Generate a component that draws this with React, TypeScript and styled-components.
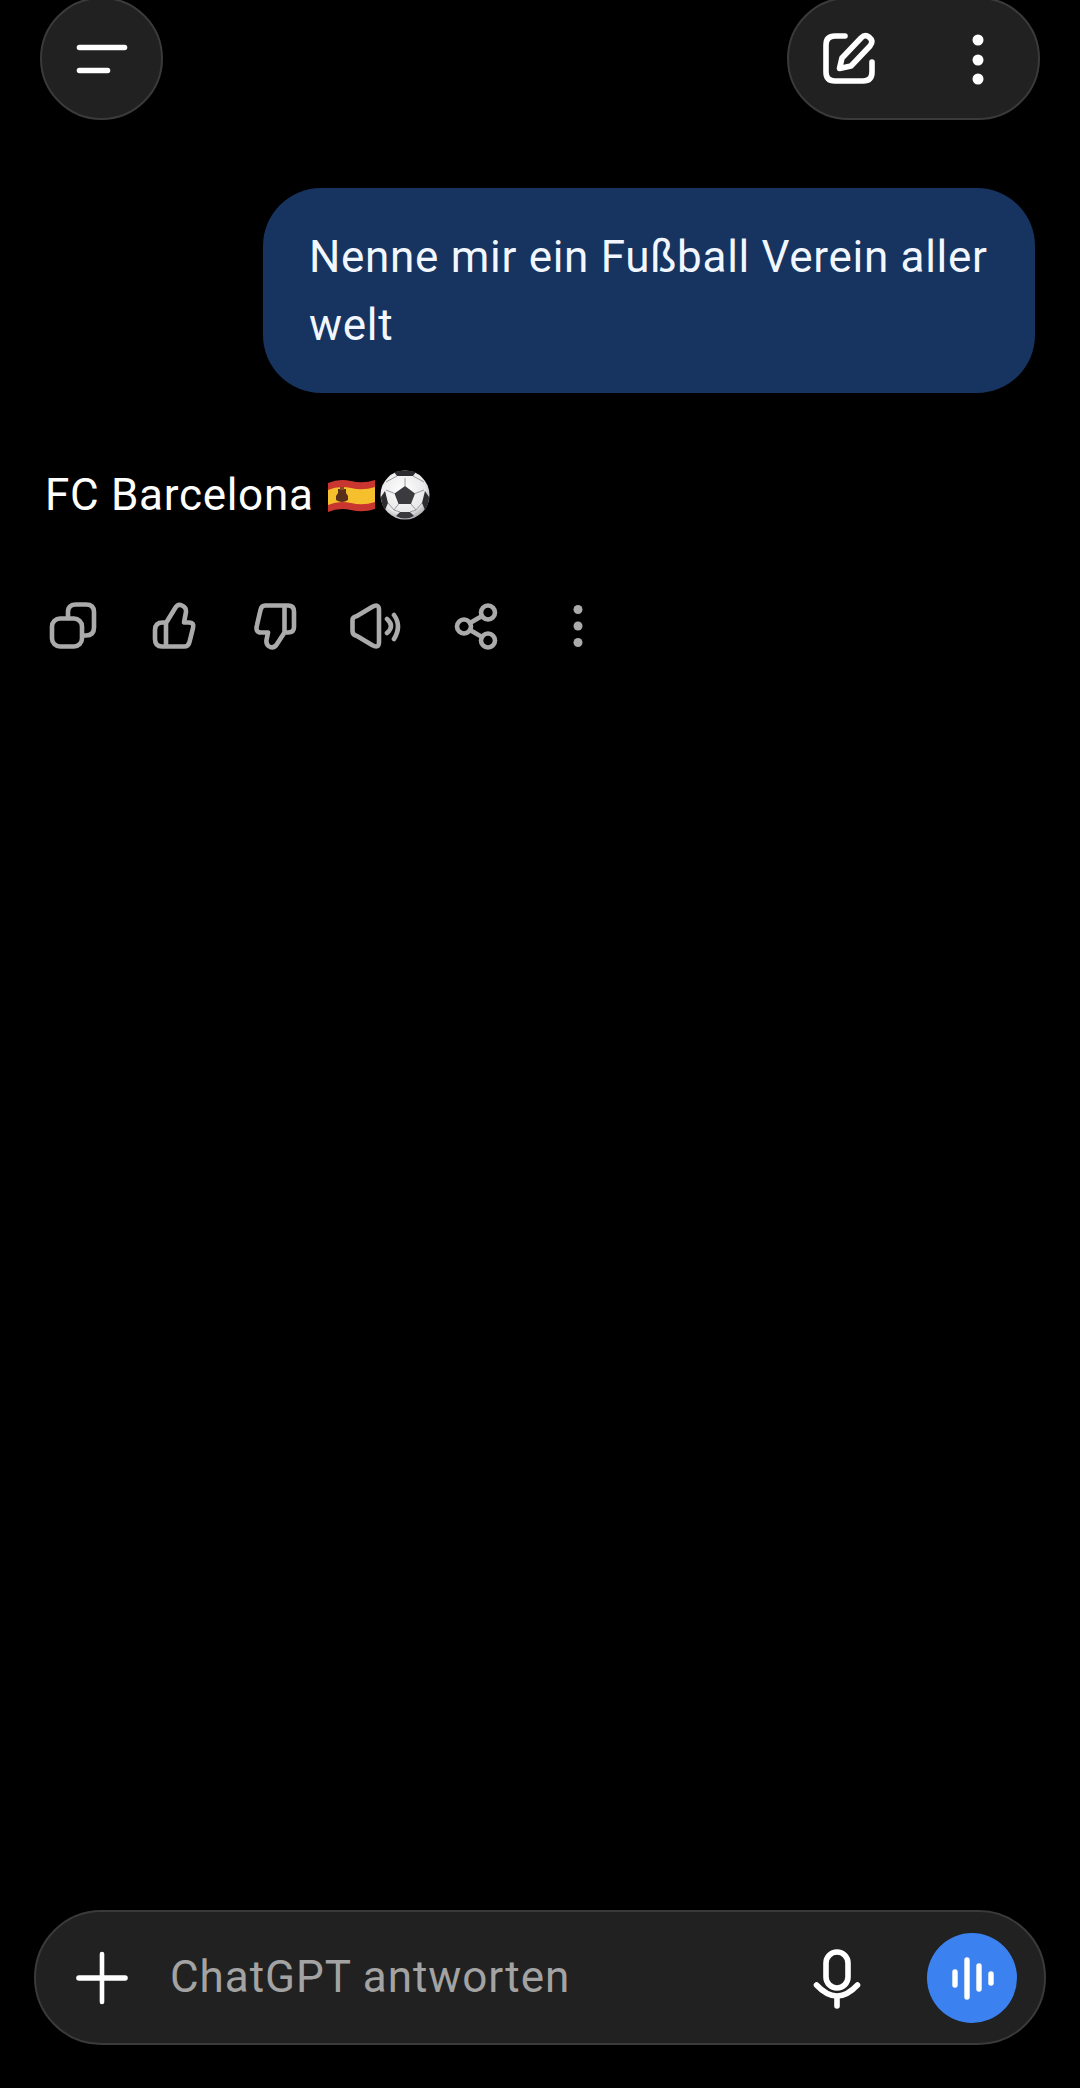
import styled, { createGlobalStyle } from "styled-components";

const GlobalStyle = createGlobalStyle`
  html, body {
    margin: 0;
    padding: 0;
    background: #000;
  }
`;

const Page = styled.div`
  width: 1080px;
  height: 2088px;
  display: flex;
  flex-direction: column;
  overflow: hidden;
  background: #000;
  color: #fff;
  font-family: Roboto, "Liberation Sans", sans-serif;
  font-size: 44px;
  letter-spacing: 0.7px;
`;

const TopBar = styled.header`
  display: flex;
  justify-content: space-between;
  margin-top: -3px;
  padding: 0 40px;
`;

const Pill = styled.div`
  box-sizing: border-box;
  height: 123px;
  display: flex;
  align-items: center;
  justify-content: center;
  gap: 65px;
  padding: 0 28px;
  background: #212121;
  border: 2px solid #3a3a3a;
  border-radius: 62px;
`;

const MenuPill = styled(Pill)`
  width: 123px;
  padding: 0;
`;

const Chat = styled.main`
  display: flex;
  flex-direction: column;
  padding-top: 68px;
`;

const Bubble = styled.div`
  box-sizing: border-box;
  align-self: flex-end;
  width: 772px;
  margin-right: 45px;
  padding: 35px 30px 34px 46px;
  background: #16345f;
  border-radius: 58px;
  color: #f2f7ff;
  line-height: 68px;
`;

const Answer = styled.div`
  display: flex;
  align-items: center;
  height: 72px;
  margin-top: 66px;
  padding-left: 45px;
`;

const AnswerText = styled.span`
  margin-right: 13px;
`;

const Flag = styled.svg`
  margin-right: 4px;
`;

const Actions = styled.div`
  display: flex;
  margin-top: 67px;
  padding-left: 22px;
`;

const ActionSlot = styled.div`
  width: 101px;
  height: 56px;
  display: flex;
  justify-content: center;
`;

const Icon = styled.svg`
  display: block;
  flex: none;
  fill: none;
  stroke-linecap: round;
  stroke-linejoin: round;
`;

const ActionIcon = styled(Icon).attrs({ width: 56, height: 56, viewBox: "0 0 56 56" })`
  stroke: #ababab;
  stroke-width: 4.6;
`;

const TopIcon = styled(Icon).attrs({ width: 64, height: 64, viewBox: "0 0 64 64" })`
  stroke: #fff;
  stroke-width: 5.6;
`;

const Composer = styled.footer`
  box-sizing: border-box;
  height: 135px;
  display: flex;
  align-items: center;
  margin: auto 34px 43px;
  padding: 0 27px 0 34px;
  background: #212121;
  border: 2px solid #3a3a3a;
  border-radius: 68px;
`;

const Placeholder = styled.div`
  flex: 1;
  margin-left: 36px;
  margin-bottom: 2px;
  color: #a3a3a3;
  letter-spacing: 0.95px;
`;

const VoiceButton = styled.div`
  width: 90px;
  height: 90px;
  display: flex;
  align-items: center;
  justify-content: center;
  margin-left: 57px;
  background: #3b82f0;
  border-radius: 50%;
`;

function SpainFlag() {
  return (
    <Flag width="49" height="36" viewBox="0 0 49 36">
      <path d="M1 6 Q12 1 24 4 T48 3 V32 Q36 36 24 33 T1 35 Z" fill="#c8362f" />
      <path d="M1 13 Q12 8 24 11 T48 10 V25 Q36 29 24 26 T1 28 Z" fill="#f6c02c" />
      <path d="M11 12 h8 v4 l2 3 v4 q-6 4 -12 0 v-4 l2 -3 z" fill="#5a2f1a" />
      <path d="M13 10 h4 v3 h-4 z" fill="#8a4a22" />
    </Flag>
  );
}

function SoccerBall() {
  return (
    <svg width="50" height="50" viewBox="0 0 50 50">
      <defs>
        <radialGradient id="ballShade" cx="45%" cy="40%" r="62%">
          <stop offset="0%" stopColor="#fff" />
          <stop offset="75%" stopColor="#e8e8ea" />
          <stop offset="100%" stopColor="#a9a9ad" />
        </radialGradient>
      </defs>
      <circle cx="25" cy="25" r="24.5" fill="url(#ballShade)" />
      <path d="M25 16 L35 23.5 L31 34 H18.5 L14.5 23.5 Z" fill="#3b3b3f" />
      <path d="M14 2 Q25 -1 36 2 L33 6 H17 Z" fill="#2c2c30" />
      <path d="M1 27 L5 21 L8 33 L5 40 Q1 34 1 27 Z" fill="#2c2c30" />
      <path d="M49 27 L45 21 L42 33 L45 40 Q49 34 49 27 Z" fill="#2c2c30" />
      <path d="M16 46 L20 42 H30 L34 46 Q25 51 16 46 Z" fill="#3a3a3e" />
      <path
        d="M25 16 V8 M14.5 23.5 L6 20 M35 23.5 L44 20 M18.5 34 L14 40 M31 34 L36 40 M17 6 L6 12 M33 6 L44 12 M8 33 L14 40 L20 42 M42 33 L36 40 L30 42"
        stroke="#9a9a9e"
        strokeWidth="1"
        fill="none"
      />
    </svg>
  );
}

export default function App() {
  return (
    <Page>
      <GlobalStyle />
      <TopBar>
        <MenuPill>
          <TopIcon>
            <path d="M9.5 20.5 H54.5 M9.5 43.5 H37.5" />
          </TopIcon>
        </MenuPill>
        <Pill>
          <TopIcon>
            <path d="M28 9 H18 Q9 9 9 18 V45 Q9 54 18 54 H46 Q55 54 55 45 V35" />
            <path d="M22.5 41.5 L25 31 L44 11 Q48 7 52 10 Q57 14 53 19 L34 39 Z" />
          </TopIcon>
          <TopIcon>
            <circle cx="32" cy="13" r="5.5" fill="#fff" stroke="none" />
            <circle cx="32" cy="33" r="5.5" fill="#fff" stroke="none" />
            <circle cx="32" cy="52" r="5.5" fill="#fff" stroke="none" />
          </TopIcon>
        </Pill>
      </TopBar>

      <Chat>
        <Bubble>Nenne mir ein Fußball Verein aller welt</Bubble>
        <Answer>
          <AnswerText>FC Barcelona</AnswerText>
          <SpainFlag />
          <SoccerBall />
        </Answer>
        <Actions>
          <ActionSlot>
            <ActionIcon>
              <rect x="7" y="20.5" width="30" height="28" rx="8" />
              <path d="M23 20 V14 Q23 6.5 31 6.5 H41 Q49 6.5 49 14 V29.5 Q49 37.5 41 37.5 H38" />
            </ActionIcon>
          </ActionSlot>
          <ActionSlot>
            <ActionIcon>
              <path d="M20 48.5 V25 L29.5 9.5 Q32 5.5 36 7.5 Q40.5 9.5 40 14 L38 24.5 H43 Q48.5 24.5 47 30 L43.5 44 Q42.5 48.5 38 48.5 H16 Q9 48.5 9 41 V32 Q9 24.5 17 24.5 H20" />
            </ActionIcon>
          </ActionSlot>
          <ActionSlot>
            <ActionIcon>
              <path d="M37.5 34.5 L29 47.5 Q25.5 51 21.5 48 Q19 46 19.5 42 L21 34.5 H14 Q8 34.5 10 27 L13.5 12 Q14.5 7.5 18 7.5 H41 Q47 7.5 47 13.5 V29 Q47 34.5 41 34.5 H37.5 V7.5" />
            </ActionIcon>
          </ActionSlot>
          <ActionSlot>
            <ActionIcon>
              <path d="M9 18 L24 9 Q31 5 31 12 V44 Q31 51 24 47 L9 38 Q4.5 37 4.5 33 V22 Q4.5 19 9 18 Z" />
              <path d="M39 21 Q47 28 39 35 M46 17 Q54 28 46 41" />
            </ActionIcon>
          </ActionSlot>
          <ActionSlot>
            <ActionIcon>
              <circle cx="15" cy="28.5" r="7" />
              <circle cx="39" cy="14.5" r="7" />
              <circle cx="39" cy="42.5" r="7" />
              <path d="M21 25 L33 18 M21 32 L33 39" />
            </ActionIcon>
          </ActionSlot>
          <ActionSlot>
            <ActionIcon>
              <circle cx="28" cy="11.5" r="4.5" fill="#ababab" stroke="none" />
              <circle cx="28" cy="28" r="4.5" fill="#ababab" stroke="none" />
              <circle cx="28" cy="44.5" r="4.5" fill="#ababab" stroke="none" />
            </ActionIcon>
          </ActionSlot>
        </Actions>
      </Chat>

      <Composer>
        <TopIcon>
          <path d="M9 32 H55" />
          <path d="M32 8 V56" strokeWidth="4.6" />
        </TopIcon>
        <Placeholder>ChatGPT antworten</Placeholder>
        <TopIcon>
          <rect x="20" y="6" width="22" height="36" rx="11" />
          <path d="M10.5 39 Q31 61 51.5 39 M31 50 V60" />
        </TopIcon>
        <VoiceButton>
          <Icon width="48" height="48" viewBox="0 0 48 48" stroke="#fff" strokeWidth="5.4">
            <path d="M7 18 V31 M19 6 V43 M31 12 V35 M43 20 V29" />
          </Icon>
        </VoiceButton>
      </Composer>
    </Page>
  );
}
